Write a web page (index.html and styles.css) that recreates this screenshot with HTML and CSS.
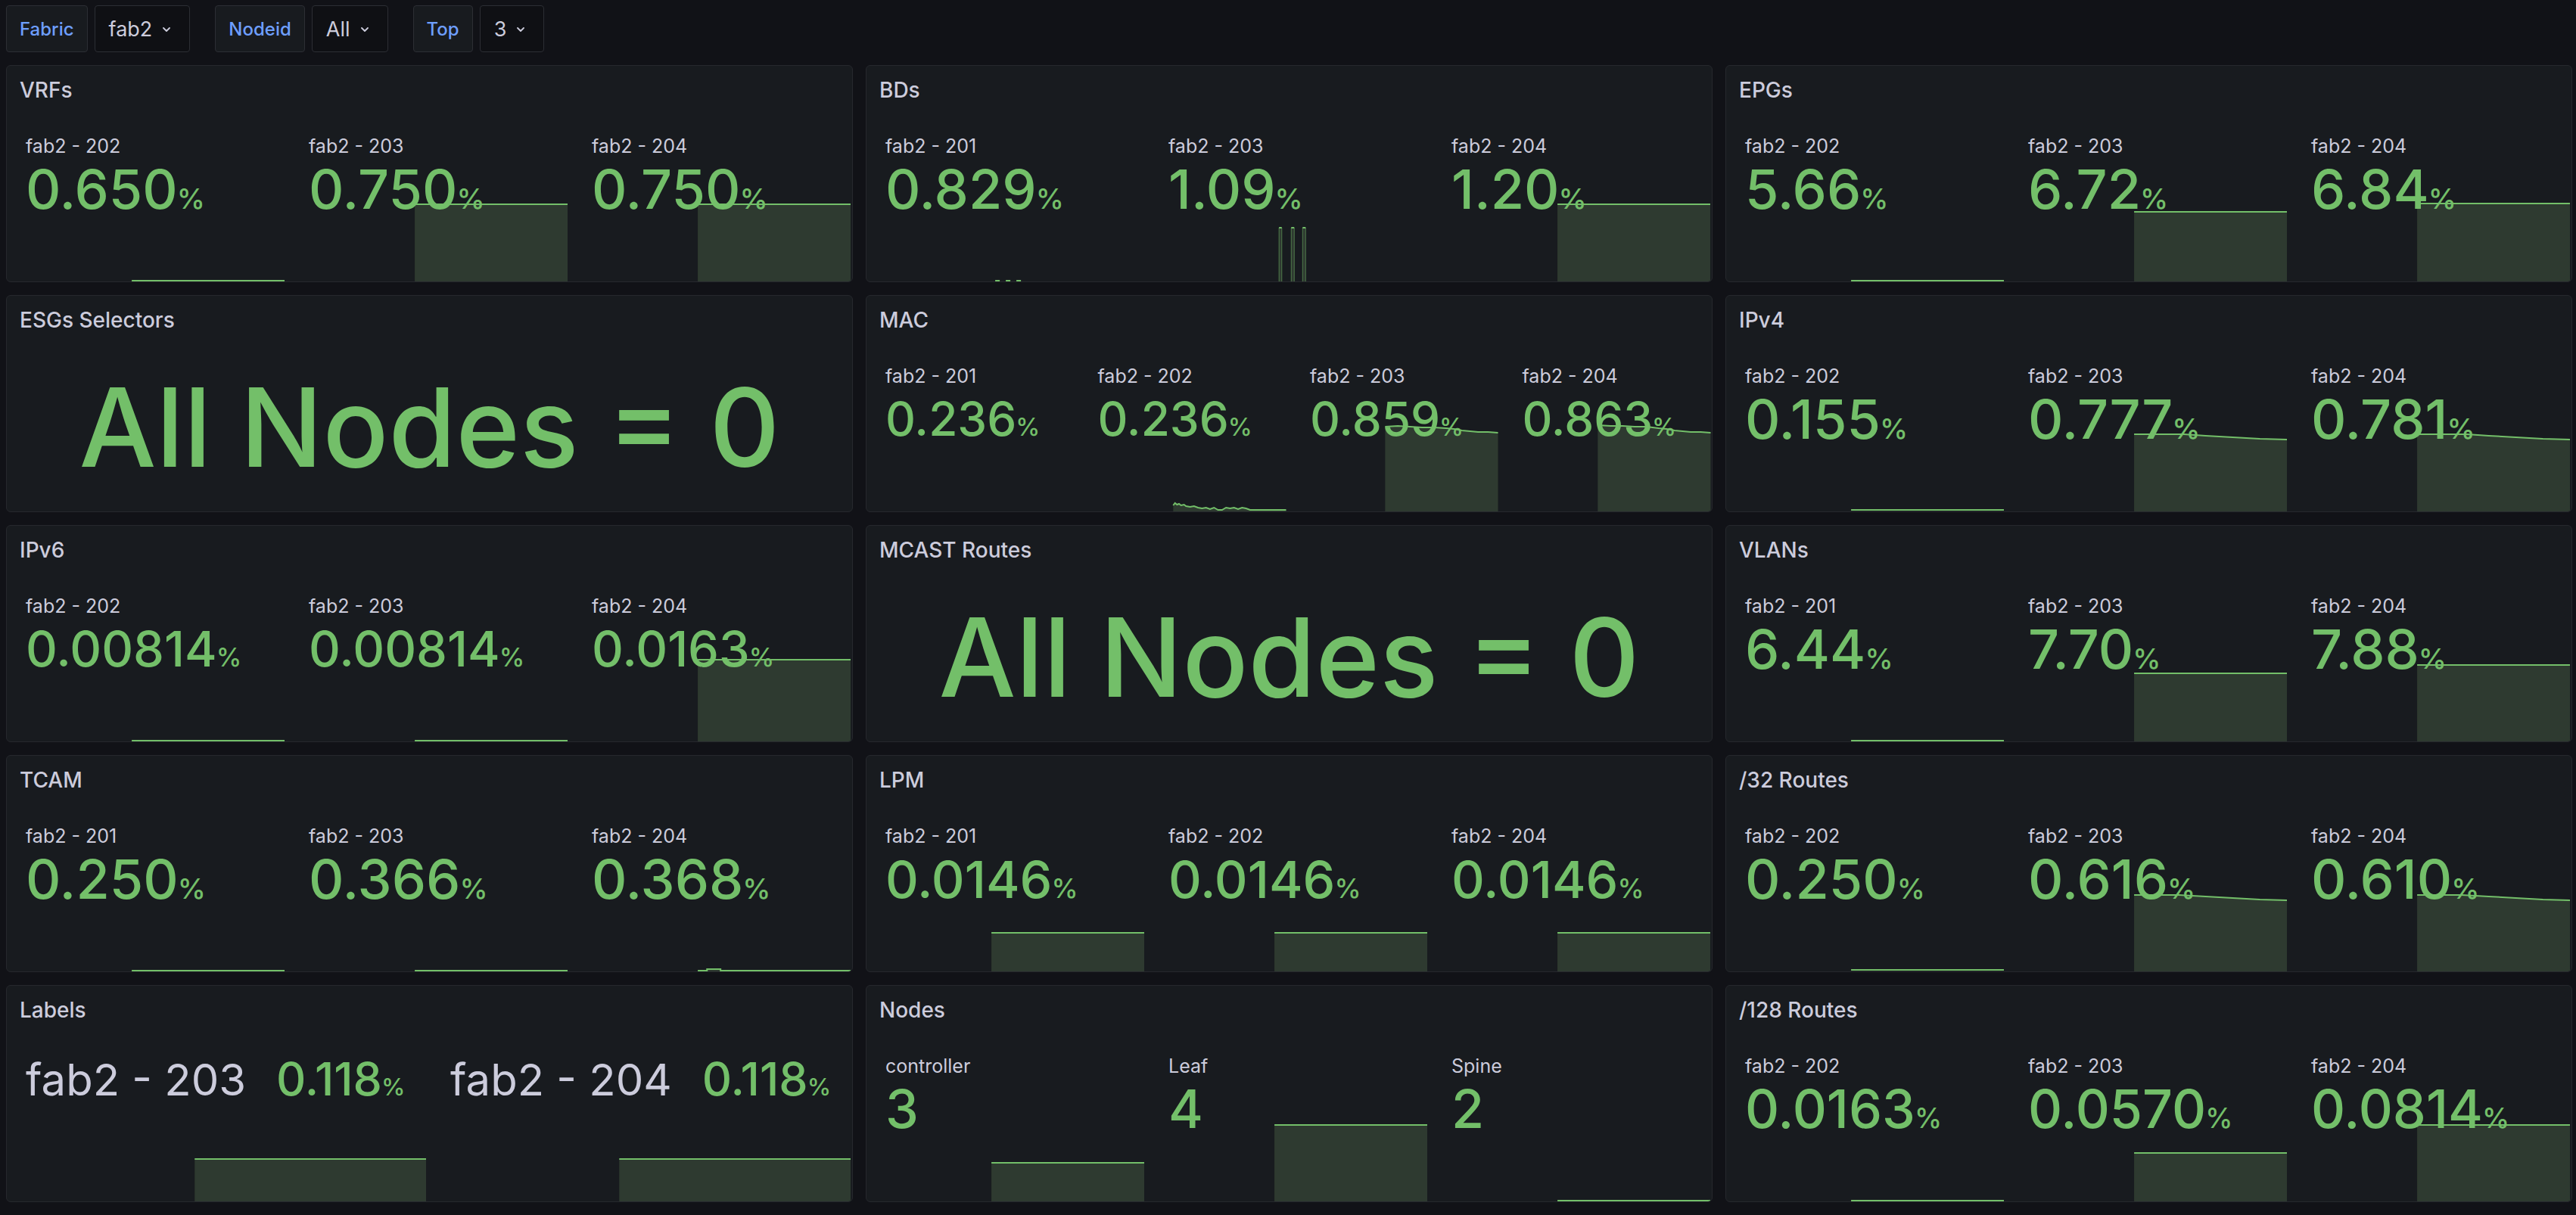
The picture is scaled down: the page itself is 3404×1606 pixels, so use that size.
FILE: index.html
```html
<!DOCTYPE html>
<html lang="en">
<head>
<meta charset="utf-8">
<title>Dashboard</title>
<link rel="stylesheet" href="styles.css">
</head>
<body>
<header class="toolbar">
  <div class="var">
    <span class="var-label">Fabric</span>
    <span class="var-value">fab2<svg class="chev" viewBox="0 0 10 6"><path d="M1 1L5 5L9 1"/></svg></span>
  </div>
  <div class="var">
    <span class="var-label">Nodeid</span>
    <span class="var-value">All<svg class="chev" viewBox="0 0 10 6"><path d="M1 1L5 5L9 1"/></svg></span>
  </div>
  <div class="var">
    <span class="var-label">Top</span>
    <span class="var-value">3<svg class="chev" viewBox="0 0 10 6"><path d="M1 1L5 5L9 1"/></svg></span>
  </div>
</header>

<main class="grid">
  <!-- Row 1 -->
  <section class="panel">
    <div class="panel-title">VRFs</div>
    <div class="stats">
      <div class="stat">
        <svg class="spark" viewBox="0 0 100 136" preserveAspectRatio="none"><path class="line" d="M43.6 135H100"/></svg>
        <div class="stat-name">fab2 - 202</div>
        <div class="stat-value">0.650<span class="unit">%</span></div>
      </div>
      <div class="stat">
        <svg class="spark" viewBox="0 0 100 136" preserveAspectRatio="none"><path class="area" d="M43.6 34H100V136H43.6Z"/><path class="line" d="M43.6 34H100"/></svg>
        <div class="stat-name">fab2 - 203</div>
        <div class="stat-value">0.750<span class="unit">%</span></div>
      </div>
      <div class="stat">
        <svg class="spark" viewBox="0 0 100 136" preserveAspectRatio="none"><path class="area" d="M43.6 34H100V136H43.6Z"/><path class="line" d="M43.6 34H100"/></svg>
        <div class="stat-name">fab2 - 204</div>
        <div class="stat-value">0.750<span class="unit">%</span></div>
      </div>
    </div>
  </section>

  <section class="panel">
    <div class="panel-title">BDs</div>
    <div class="stats">
      <div class="stat">
        <svg class="spark" viewBox="0 0 100 136" preserveAspectRatio="none"><path class="line dash" d="M45 135H56"/></svg>
        <div class="stat-name">fab2 - 201</div>
        <div class="stat-value">0.829<span class="unit">%</span></div>
      </div>
      <div class="stat">
        <svg class="spark" viewBox="0 0 100 136" preserveAspectRatio="none"><path class="area" d="M45.3 136V65H46.3V136ZM49.8 136V65H50.9V136ZM54 136V65H55.1V136Z"/><path class="line thin" d="M45.3 136V65M46.3 65V136M49.8 136V65M50.9 65V136M54 136V65M55.1 65V136"/><path class="line" d="M45.3 65H46.3M49.8 65H50.9M54 65H55.1"/></svg>
        <div class="stat-name">fab2 - 203</div>
        <div class="stat-value">1.09<span class="unit">%</span></div>
      </div>
      <div class="stat">
        <svg class="spark" viewBox="0 0 100 136" preserveAspectRatio="none"><path class="area" d="M43.6 34H100V136H43.6Z"/><path class="line" d="M43.6 34H100"/></svg>
        <div class="stat-name">fab2 - 204</div>
        <div class="stat-value">1.20<span class="unit">%</span></div>
      </div>
    </div>
  </section>

  <section class="panel">
    <div class="panel-title">EPGs</div>
    <div class="stats">
      <div class="stat">
        <svg class="spark" viewBox="0 0 100 136" preserveAspectRatio="none"><path class="line" d="M43.6 135H100"/></svg>
        <div class="stat-name">fab2 - 202</div>
        <div class="stat-value">5.66<span class="unit">%</span></div>
      </div>
      <div class="stat">
        <svg class="spark" viewBox="0 0 100 136" preserveAspectRatio="none"><path class="area" d="M43.6 44H100V136H43.6Z"/><path class="line" d="M43.6 44H100"/></svg>
        <div class="stat-name">fab2 - 203</div>
        <div class="stat-value">6.72<span class="unit">%</span></div>
      </div>
      <div class="stat">
        <svg class="spark" viewBox="0 0 100 136" preserveAspectRatio="none"><path class="area" d="M43.6 33H100V136H43.6Z"/><path class="line" d="M43.6 33H100"/></svg>
        <div class="stat-name">fab2 - 204</div>
        <div class="stat-value">6.84<span class="unit">%</span></div>
      </div>
    </div>
  </section>

  <!-- Row 2 -->
  <section class="panel">
    <div class="panel-title">ESGs Selectors</div>
    <div class="big-text">All Nodes = 0</div>
  </section>

  <section class="panel">
    <div class="panel-title">MAC</div>
    <div class="stats">
      <div class="stat">
        <div class="stat-name">fab2 - 201</div>
        <div class="stat-value v62">0.236<span class="unit">%</span></div>
      </div>
      <div class="stat">
        <svg class="spark" viewBox="0 0 100 136" preserveAspectRatio="none"><path class="area" d="M43.6 128L44.5 125L45.5 127L46.5 126L47.5 128L49 127L50 129L52 130L54 129L56 131L58 132L60 131L62 133L64 131L66 134L68 134L70 131L72 132L74 131L76 133L78 131L80 132L82 134L100 134V136H43.6Z"/><path class="line" d="M43.6 128L44.5 125L45.5 127L46.5 126L47.5 128L49 127L50 129L52 130L54 129L56 131L58 132L60 131L62 133L64 131L66 134L68 134L70 131L72 132L74 131L76 133L78 131L80 132L82 134L100 134"/></svg>
        <div class="stat-name">fab2 - 202</div>
        <div class="stat-value v62">0.236<span class="unit">%</span></div>
      </div>
      <div class="stat">
        <svg class="spark" viewBox="0 0 100 136" preserveAspectRatio="none"><path class="area" d="M43.6 24L50 23L56 24L62 25L68 25L74 26L78 27L82 29L86 30L90 31L95 31L100 32V136H43.6Z"/><path class="line" d="M43.6 24L50 23L56 24L62 25L68 25L74 26L78 27L82 29L86 30L90 31L95 31L100 32"/></svg>
        <div class="stat-name">fab2 - 203</div>
        <div class="stat-value v62">0.859<span class="unit">%</span></div>
      </div>
      <div class="stat">
        <svg class="spark" viewBox="0 0 100 136" preserveAspectRatio="none"><path class="area" d="M43.6 22L50 23L56 23L62 24L68 24L74 26L78 27L82 29L86 30L90 31L95 31L100 32V136H43.6Z"/><path class="line" d="M43.6 22L50 23L56 23L62 24L68 24L74 26L78 27L82 29L86 30L90 31L95 31L100 32"/></svg>
        <div class="stat-name">fab2 - 204</div>
        <div class="stat-value v62">0.863<span class="unit">%</span></div>
      </div>
    </div>
  </section>

  <section class="panel">
    <div class="panel-title">IPv4</div>
    <div class="stats">
      <div class="stat">
        <svg class="spark" viewBox="0 0 100 136" preserveAspectRatio="none"><path class="line" d="M43.6 134H100"/></svg>
        <div class="stat-name">fab2 - 202</div>
        <div class="stat-value">0.155<span class="unit">%</span></div>
      </div>
      <div class="stat">
        <svg class="spark" viewBox="0 0 100 136" preserveAspectRatio="none"><path class="area" d="M43.6 34L62 34L70 36L80 38L90 40L100 41V136H43.6Z"/><path class="line" d="M43.6 34L62 34L70 36L80 38L90 40L100 41"/></svg>
        <div class="stat-name">fab2 - 203</div>
        <div class="stat-value">0.777<span class="unit">%</span></div>
      </div>
      <div class="stat">
        <svg class="spark" viewBox="0 0 100 136" preserveAspectRatio="none"><path class="area" d="M43.6 34L62 34L70 36L80 38L90 40L100 41V136H43.6Z"/><path class="line" d="M43.6 34L62 34L70 36L80 38L90 40L100 41"/></svg>
        <div class="stat-name">fab2 - 204</div>
        <div class="stat-value">0.781<span class="unit">%</span></div>
      </div>
    </div>
  </section>

  <!-- Row 3 -->
  <section class="panel">
    <div class="panel-title">IPv6</div>
    <div class="stats">
      <div class="stat">
        <svg class="spark" viewBox="0 0 100 136" preserveAspectRatio="none"><path class="line" d="M43.6 135H100"/></svg>
        <div class="stat-name">fab2 - 202</div>
        <div class="stat-value v65">0.00814<span class="unit">%</span></div>
      </div>
      <div class="stat">
        <svg class="spark" viewBox="0 0 100 136" preserveAspectRatio="none"><path class="line" d="M43.6 135H100"/></svg>
        <div class="stat-name">fab2 - 203</div>
        <div class="stat-value v65">0.00814<span class="unit">%</span></div>
      </div>
      <div class="stat">
        <svg class="spark" viewBox="0 0 100 136" preserveAspectRatio="none"><path class="area" d="M43.6 28H100V136H43.6Z"/><path class="line" d="M43.6 28H100"/></svg>
        <div class="stat-name">fab2 - 204</div>
        <div class="stat-value v65">0.0163<span class="unit">%</span></div>
      </div>
    </div>
  </section>

  <section class="panel">
    <div class="panel-title">MCAST Routes</div>
    <div class="big-text">All Nodes = 0</div>
  </section>

  <section class="panel">
    <div class="panel-title">VLANs</div>
    <div class="stats">
      <div class="stat">
        <svg class="spark" viewBox="0 0 100 136" preserveAspectRatio="none"><path class="line" d="M43.6 135H100"/></svg>
        <div class="stat-name">fab2 - 201</div>
        <div class="stat-value">6.44<span class="unit">%</span></div>
      </div>
      <div class="stat">
        <svg class="spark" viewBox="0 0 100 136" preserveAspectRatio="none"><path class="area" d="M43.6 46H100V136H43.6Z"/><path class="line" d="M43.6 46H100"/></svg>
        <div class="stat-name">fab2 - 203</div>
        <div class="stat-value">7.70<span class="unit">%</span></div>
      </div>
      <div class="stat">
        <svg class="spark" viewBox="0 0 100 136" preserveAspectRatio="none"><path class="area" d="M43.6 35H100V136H43.6Z"/><path class="line" d="M43.6 35H100"/></svg>
        <div class="stat-name">fab2 - 204</div>
        <div class="stat-value">7.88<span class="unit">%</span></div>
      </div>
    </div>
  </section>

  <!-- Row 4 -->
  <section class="panel">
    <div class="panel-title">TCAM</div>
    <div class="stats">
      <div class="stat">
        <svg class="spark" viewBox="0 0 100 136" preserveAspectRatio="none"><path class="line" d="M43.6 135H100"/></svg>
        <div class="stat-name">fab2 - 201</div>
        <div class="stat-value">0.250<span class="unit">%</span></div>
      </div>
      <div class="stat">
        <svg class="spark" viewBox="0 0 100 136" preserveAspectRatio="none"><path class="line" d="M43.6 135H100"/></svg>
        <div class="stat-name">fab2 - 203</div>
        <div class="stat-value">0.366<span class="unit">%</span></div>
      </div>
      <div class="stat">
        <svg class="spark" viewBox="0 0 100 136" preserveAspectRatio="none"><path class="area" d="M43.6 135H47V133H52V135H100V136H43.6Z"/><path class="line" d="M43.6 135H47V133H52V135H100"/></svg>
        <div class="stat-name">fab2 - 204</div>
        <div class="stat-value">0.368<span class="unit">%</span></div>
      </div>
    </div>
  </section>

  <section class="panel">
    <div class="panel-title">LPM</div>
    <div class="stats">
      <div class="stat">
        <svg class="spark" viewBox="0 0 100 136" preserveAspectRatio="none"><path class="area" d="M43.6 85H100V136H43.6Z"/><path class="line" d="M43.6 85H100"/></svg>
        <div class="stat-name">fab2 - 201</div>
        <div class="stat-value v68">0.0146<span class="unit">%</span></div>
      </div>
      <div class="stat">
        <svg class="spark" viewBox="0 0 100 136" preserveAspectRatio="none"><path class="area" d="M43.6 85H100V136H43.6Z"/><path class="line" d="M43.6 85H100"/></svg>
        <div class="stat-name">fab2 - 202</div>
        <div class="stat-value v68">0.0146<span class="unit">%</span></div>
      </div>
      <div class="stat">
        <svg class="spark" viewBox="0 0 100 136" preserveAspectRatio="none"><path class="area" d="M43.6 85H100V136H43.6Z"/><path class="line" d="M43.6 85H100"/></svg>
        <div class="stat-name">fab2 - 204</div>
        <div class="stat-value v68">0.0146<span class="unit">%</span></div>
      </div>
    </div>
  </section>

  <section class="panel">
    <div class="panel-title">/32 Routes</div>
    <div class="stats">
      <div class="stat">
        <svg class="spark" viewBox="0 0 100 136" preserveAspectRatio="none"><path class="line" d="M43.6 134H100"/></svg>
        <div class="stat-name">fab2 - 202</div>
        <div class="stat-value">0.250<span class="unit">%</span></div>
      </div>
      <div class="stat">
        <svg class="spark" viewBox="0 0 100 136" preserveAspectRatio="none"><path class="area" d="M43.6 35L60 35L70 37L80 39L90 41L100 42V136H43.6Z"/><path class="line" d="M43.6 35L60 35L70 37L80 39L90 41L100 42"/></svg>
        <div class="stat-name">fab2 - 203</div>
        <div class="stat-value">0.616<span class="unit">%</span></div>
      </div>
      <div class="stat">
        <svg class="spark" viewBox="0 0 100 136" preserveAspectRatio="none"><path class="area" d="M43.6 35L60 35L70 37L80 39L90 41L100 42V136H43.6Z"/><path class="line" d="M43.6 35L60 35L70 37L80 39L90 41L100 42"/></svg>
        <div class="stat-name">fab2 - 204</div>
        <div class="stat-value">0.610<span class="unit">%</span></div>
      </div>
    </div>
  </section>

  <!-- Row 5 -->
  <section class="panel">
    <div class="panel-title">Labels</div>
    <div class="stats">
      <div class="stat stat-h">
        <svg class="spark" viewBox="0 0 100 136" preserveAspectRatio="none"><path class="area" d="M43.9 80H100V136H43.9Z"/><path class="line" d="M43.9 80H100"/></svg>
        <div class="h-name">fab2 - 203</div>
        <div class="h-value">0.118<span class="unit">%</span></div>
      </div>
      <div class="stat stat-h">
        <svg class="spark" viewBox="0 0 100 136" preserveAspectRatio="none"><path class="area" d="M43.9 80H100V136H43.9Z"/><path class="line" d="M43.9 80H100"/></svg>
        <div class="h-name">fab2 - 204</div>
        <div class="h-value">0.118<span class="unit">%</span></div>
      </div>
    </div>
  </section>

  <section class="panel">
    <div class="panel-title">Nodes</div>
    <div class="stats">
      <div class="stat">
        <svg class="spark" viewBox="0 0 100 136" preserveAspectRatio="none"><path class="area" d="M43.6 85H100V136H43.6Z"/><path class="line" d="M43.6 85H100"/></svg>
        <div class="stat-name">controller</div>
        <div class="stat-value v70">3</div>
      </div>
      <div class="stat">
        <svg class="spark" viewBox="0 0 100 136" preserveAspectRatio="none"><path class="area" d="M43.6 35H100V136H43.6Z"/><path class="line" d="M43.6 35H100"/></svg>
        <div class="stat-name">Leaf</div>
        <div class="stat-value v70">4</div>
      </div>
      <div class="stat">
        <svg class="spark" viewBox="0 0 100 136" preserveAspectRatio="none"><path class="line" d="M43.6 135H100"/></svg>
        <div class="stat-name">Spine</div>
        <div class="stat-value v70">2</div>
      </div>
    </div>
  </section>

  <section class="panel">
    <div class="panel-title">/128 Routes</div>
    <div class="stats">
      <div class="stat">
        <svg class="spark" viewBox="0 0 100 136" preserveAspectRatio="none"><path class="line" d="M43.6 135H100"/></svg>
        <div class="stat-name">fab2 - 202</div>
        <div class="stat-value v70">0.0163<span class="unit">%</span></div>
      </div>
      <div class="stat">
        <svg class="spark" viewBox="0 0 100 136" preserveAspectRatio="none"><path class="area" d="M43.6 72H100V136H43.6Z"/><path class="line" d="M43.6 72H100"/></svg>
        <div class="stat-name">fab2 - 203</div>
        <div class="stat-value v70">0.0570<span class="unit">%</span></div>
      </div>
      <div class="stat">
        <svg class="spark" viewBox="0 0 100 136" preserveAspectRatio="none"><path class="area" d="M43.6 35H100V136H43.6Z"/><path class="line" d="M43.6 35H100"/></svg>
        <div class="stat-name">fab2 - 204</div>
        <div class="stat-value v70">0.0814<span class="unit">%</span></div>
      </div>
    </div>
  </section>
</main>
</body>
</html>
```

FILE: styles.css
```css
* { box-sizing: border-box; }

html, body {
  margin: 0;
  background: #111217;
}

body {
  padding: 7px 5px 0 8px;
  font-family: Inter, "Noto Sans", "Liberation Sans", sans-serif;
  color: #ccccdc;
  min-height: 1606px;
}

/* ---------- toolbar ---------- */
.toolbar {
  display: flex;
  gap: 33px;
  height: 62px;
}

.var {
  display: flex;
  gap: 9px;
}

.var-label,
.var-value {
  display: flex;
  align-items: center;
  height: 62px;
  border: 1px solid #2c2e34;
  border-radius: 4px;
}

.var-label {
  padding: 0 17px;
  background: #181b1f;
  color: #6e9fff;
  font-size: 24px;
  font-weight: 500;
}

.var-value {
  padding: 0 25px 0 18px;
  background: #0f1014;
  color: #ccccdc;
  font-size: 27px;
}

.chev {
  width: 10px;
  height: 6px;
  margin-left: 14px;
  margin-top: 2px;
}

.chev path {
  fill: none;
  stroke: #ccccdc;
  stroke-width: 1.8;
  stroke-linecap: round;
  stroke-linejoin: round;
}

/* ---------- grid ---------- */
.grid {
  margin-top: 17px;
  display: grid;
  grid-template-columns: repeat(3, 1119px);
  grid-template-rows: repeat(5, 287px);
  gap: 17px;
}

.panel {
  display: flex;
  flex-direction: column;
  background: #181b1f;
  border: 1px solid #26282d;
  border-radius: 6px;
  overflow: hidden;
}

.panel-title {
  flex: 0 0 64px;
  height: 64px;
  line-height: 64px;
  padding-left: 17px;
  font-size: 28px;
  font-weight: 500;
  color: #ccccdc;
}

.stats {
  flex: 1;
  display: flex;
  gap: 16px;
  padding: 0 2px 0 9px;
}

.stat {
  position: relative;
  flex: 1 1 0;
  min-width: 0;
  padding: 27px 0 0 16px;
}

.spark {
  position: absolute;
  left: 0;
  bottom: 0;
  width: 100%;
  height: 136px;
  overflow: visible;
}

.spark .area {
  fill: #2e3a30;
}

.spark .line {
  fill: none;
  stroke: #73bf69;
  stroke-width: 2;
  vector-effect: non-scaling-stroke;
}

.spark .line.thin {
  stroke: #4f7a4b;
  stroke-width: 1;
}

.spark .dash {
  stroke-dasharray: 6 8;
}

.stat-name,
.stat-value,
.h-name,
.h-value {
  position: relative;
  white-space: nowrap;
}

.stat-name {
  font-size: 25px;
  line-height: 30px;
  color: #ccccdc;
}

.stat-value {
  margin-top: 6px;
  font-size: 72px;
  line-height: 72px;
  font-weight: 500;
  color: #73bf69;
}

.stat-value .unit {
  font-size: 0.52em;
  margin-left: -1px;
}

.stat-value.v62 { font-size: 62px; }
.stat-value.v65 { font-size: 65px; }
.stat-value.v68 { font-size: 68px; }
.stat-value.v70 { font-size: 70px; }

/* horizontal name/value layout */
.stat-h {
  display: flex;
  align-items: baseline;
  gap: 40px;
  padding-top: 30px;
}

.h-name {
  font-size: 58px;
  line-height: 58px;
  color: #ccccdc;
}

.h-value {
  font-size: 61px;
  line-height: 58px;
  font-weight: 500;
  color: #73bf69;
}

.h-value .unit {
  font-size: 0.52em;
  margin-left: -1px;
}

/* centered big text */
.big-text {
  flex: 1;
  display: flex;
  align-items: center;
  justify-content: center;
  font-size: 144px;
  line-height: 1;
  font-weight: 500;
  color: #73bf69;
  padding-bottom: 2px;
}
```
